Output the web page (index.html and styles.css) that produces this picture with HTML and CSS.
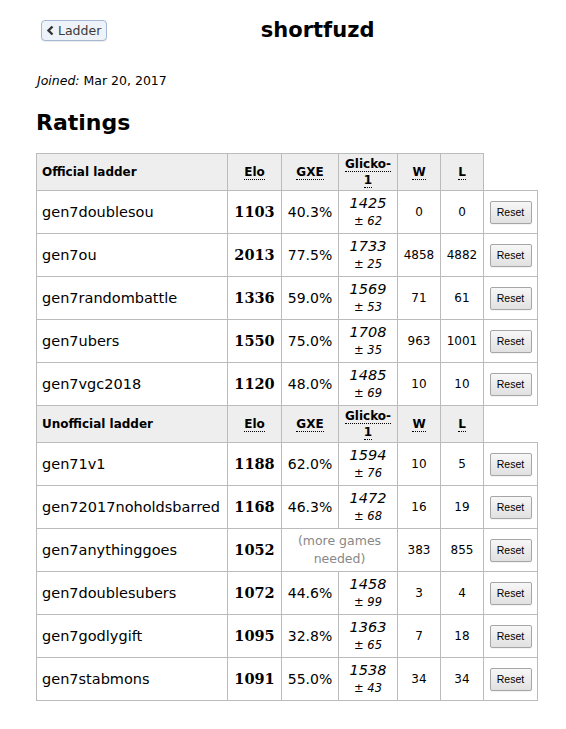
FILE: index.html
```html
<!DOCTYPE html>
<html>
<head>
<meta charset="utf-8">
<link rel="stylesheet" href="styles.css">
</head>
<body>
<div class="page">
  <div class="top">
    <a class="back" href="#"><svg width="9" height="11" viewBox="0 0 9 11"><polyline points="6.5,1.5 2.5,5.5 6.5,9.5" fill="none" stroke="#333" stroke-width="2.4"/></svg>Ladder</a>
    <h1 class="title">shortfuzd</h1>
  </div>
  <p class="joined"><em>Joined:</em> Mar 20, 2017</p>
  <h2 class="ratings">Ratings</h2>
  <table class="grid">
    <colgroup>
      <col class="c-name"><col class="c-elo"><col class="c-gxe"><col class="c-gl"><col class="c-w"><col class="c-l"><col class="c-btn">
    </colgroup>
    <tr class="head">
      <th class="hname">Official ladder</th>
      <th><abbr>Elo</abbr></th>
      <th><abbr>GXE</abbr></th>
      <th><abbr>Glicko-1</abbr></th>
      <th><abbr>W</abbr></th>
      <th><abbr>L</abbr></th>
    </tr>
    <tr><td class="name">gen7doublesou</td><td class="elo">1103</td><td class="gxe">40.3%</td><td class="gl"><span class="r">1425</span><span class="d">± 62</span></td><td class="wl">0</td><td class="wl">0</td><td class="btn"><button class="reset">Reset</button></td></tr>
    <tr><td class="name">gen7ou</td><td class="elo">2013</td><td class="gxe">77.5%</td><td class="gl"><span class="r">1733</span><span class="d">± 25</span></td><td class="wl">4858</td><td class="wl">4882</td><td class="btn"><button class="reset">Reset</button></td></tr>
    <tr><td class="name">gen7randombattle</td><td class="elo">1336</td><td class="gxe">59.0%</td><td class="gl"><span class="r">1569</span><span class="d">± 53</span></td><td class="wl">71</td><td class="wl">61</td><td class="btn"><button class="reset">Reset</button></td></tr>
    <tr><td class="name">gen7ubers</td><td class="elo">1550</td><td class="gxe">75.0%</td><td class="gl"><span class="r">1708</span><span class="d">± 35</span></td><td class="wl">963</td><td class="wl">1001</td><td class="btn"><button class="reset">Reset</button></td></tr>
    <tr><td class="name">gen7vgc2018</td><td class="elo">1120</td><td class="gxe">48.0%</td><td class="gl"><span class="r">1485</span><span class="d">± 69</span></td><td class="wl">10</td><td class="wl">10</td><td class="btn"><button class="reset">Reset</button></td></tr>
    <tr class="head">
      <th class="hname">Unofficial ladder</th>
      <th><abbr>Elo</abbr></th>
      <th><abbr>GXE</abbr></th>
      <th><abbr>Glicko-1</abbr></th>
      <th><abbr>W</abbr></th>
      <th><abbr>L</abbr></th>
    </tr>
    <tr><td class="name">gen71v1</td><td class="elo">1188</td><td class="gxe">62.0%</td><td class="gl"><span class="r">1594</span><span class="d">± 76</span></td><td class="wl">10</td><td class="wl">5</td><td class="btn"><button class="reset">Reset</button></td></tr>
    <tr><td class="name">gen72017noholdsbarred</td><td class="elo">1168</td><td class="gxe">46.3%</td><td class="gl"><span class="r">1472</span><span class="d">± 68</span></td><td class="wl">16</td><td class="wl">19</td><td class="btn"><button class="reset">Reset</button></td></tr>
    <tr><td class="name">gen7anythinggoes</td><td class="elo">1052</td><td class="more" colspan="2">(more games needed)</td><td class="wl">383</td><td class="wl">855</td><td class="btn"><button class="reset">Reset</button></td></tr>
    <tr><td class="name">gen7doublesubers</td><td class="elo">1072</td><td class="gxe">44.6%</td><td class="gl"><span class="r">1458</span><span class="d">± 99</span></td><td class="wl">3</td><td class="wl">4</td><td class="btn"><button class="reset">Reset</button></td></tr>
    <tr><td class="name">gen7godlygift</td><td class="elo">1095</td><td class="gxe">32.8%</td><td class="gl"><span class="r">1363</span><span class="d">± 65</span></td><td class="wl">7</td><td class="wl">18</td><td class="btn"><button class="reset">Reset</button></td></tr>
    <tr><td class="name">gen7stabmons</td><td class="elo">1091</td><td class="gxe">55.0%</td><td class="gl"><span class="r">1538</span><span class="d">± 43</span></td><td class="wl">34</td><td class="wl">34</td><td class="btn"><button class="reset">Reset</button></td></tr>
  </table>
</div>
</body>
</html>
```

FILE: styles.css
```css
html, body {
  margin: 0;
  padding: 0;
  background: #fff;
}
body {
  font-family: "DejaVu Sans", Verdana, sans-serif;
  color: #000;
}
.page {
  padding: 20px 0 0 36px;
  width: 502px;
}
.top {
  display: flex;
  align-items: flex-start;
  height: 42px;
}
.back {
  margin-left: 5px;
  display: flex;
  align-items: center;
  gap: 3px;
  height: 19px;
  padding: 0 5px 0 4px;
  border: 1px solid #a5b7d3;
  border-radius: 4px;
  background: #eef3fa;
  box-shadow: 0 1px 1px rgba(0,0,0,0.08);
  color: #3a3a3a;
  font-size: 12.5px;
  text-decoration: none;
}
.back svg {
  display: block;
}
.title {
  flex: 1;
  margin: -2px 0 0 0;
  padding-right: 10px;
  text-align: center;
  font-size: 21px;
  line-height: 24px;
  font-weight: bold;
}
.joined {
  margin: 11px 0 0 1px;
  font-size: 12.5px;
  line-height: 15px;
}
.ratings {
  margin: 22px 0 0 0;
  font-size: 22px;
  line-height: 26px;
  font-weight: bold;
}
.grid {
  margin-top: 17px;
  border-collapse: collapse;
  table-layout: fixed;
  width: 502px;
}
.c-name { width: 191px; }
.c-elo { width: 54px; }
.c-gxe { width: 57px; }
.c-gl { width: 59px; }
.c-w { width: 43px; }
.c-l { width: 43px; }
.c-btn { width: 54px; }
.grid th, .grid td {
  border: 1px solid #bbb;
  vertical-align: middle;
}
.grid th {
  background: #eee;
  font-size: 12px;
  line-height: 16px;
  padding: 2px 3px;
  height: 32px;
  text-align: center;
  font-weight: bold;
}
.grid th.hname {
  text-align: left;
  padding-left: 5px;
}
abbr {
  text-decoration: none;
  border-bottom: 1px dotted #000;
}
.grid td {
  padding: 3px 2px;
  height: 35px;
  line-height: 18px;
  text-align: center;
}
.grid td.name {
  text-align: left;
  padding-left: 5px;
  font-size: 14.5px;
}
.grid td.elo {
  font-family: "DejaVu Serif", Georgia, serif;
  font-weight: bold;
  font-size: 14.5px;
}
.grid td.gxe {
  font-size: 14px;
}
.grid td.gl {
  font-style: italic;
}
.gl .r {
  display: block;
  font-size: 14.5px;
  line-height: 18px;
  height: 18px;
}
.gl .d {
  display: block;
  font-size: 11.5px;
  line-height: 18px;
  height: 18px;
}
.grid td.wl {
  font-size: 12px;
}
.grid td.more {
  color: #888;
  font-size: 12.5px;
  line-height: 18px;
  padding: 3px 8px;
}
.reset {
  display: block;
  margin: 0 auto;
  font-family: "Liberation Sans", Arial, sans-serif;
  font-size: 10.5px;
  color: #000;
  width: 42px;
  height: 23px;
  padding: 0;
  border: 1px solid #a6a6a6;
  border-radius: 2px;
  background: linear-gradient(#f7f7f7, #e1e1e1);
  box-shadow: 0 1px 1px rgba(0,0,0,0.05);
}
```
